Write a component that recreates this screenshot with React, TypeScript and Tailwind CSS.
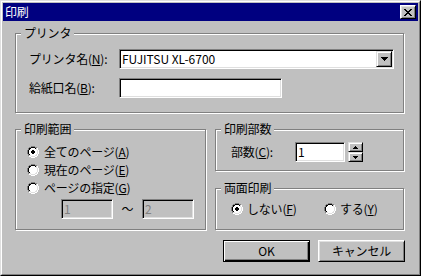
import React from "react";

function Radio({ checked }: { checked?: boolean }) {
  const rects: React.ReactElement[] = [];
  for (let y = 0; y < 12; y++) {
    for (let x = 0; x < 12; x++) {
      const dx = x + 0.5 - 6;
      const dy = y + 0.5 - 6;
      const d = Math.sqrt(dx * dx + dy * dy);
      let c: string | null = null;
      const dark = x + y <= 10;
      if (d <= 4) c = "#ffffff";
      else if (d <= 5) c = dark ? "#000000" : "#dfdfdf";
      else if (d <= 5.9) c = dark ? "#808080" : "#ffffff";
      if (c) rects.push(<rect key={`${x}-${y}`} x={x} y={y} width={1} height={1} fill={c} />);
    }
  }
  return (
    <svg width={12} height={12} viewBox="0 0 12 12" shapeRendering="crispEdges" className="shrink-0">
      {rects}
      {checked && (
        <g fill="#000">
          <rect x={5} y={4} width={2} height={1} />
          <rect x={4} y={5} width={4} height={2} />
          <rect x={5} y={7} width={2} height={1} />
        </g>
      )}
    </svg>
  );
}

function Group({ label, className, children }: { label: string; className: string; children?: React.ReactNode }) {
  return (
    <div className={`relative border border-[#808080] shadow-[inset_1px_1px_0_#ffffff,1px_1px_0_#ffffff] ${className}`}>
      <span className="absolute left-[5px] top-[-8px] bg-[#c0c0c0] px-[3px] leading-[14px]">{label}</span>
      {children}
    </div>
  );
}

function U({ c }: { c: string }) {
  return <span className="underline underline-offset-[1px]">{c}</span>;
}

const sunken =
  "border border-t-[#808080] border-l-[#808080] border-r-white border-b-white shadow-[inset_1px_1px_0_#000000,inset_-1px_-1px_0_#dfdfdf]";
const raised =
  "border border-t-[#dfdfdf] border-l-[#dfdfdf] border-r-black border-b-black shadow-[inset_1px_1px_0_#ffffff,inset_-1px_-1px_0_#808080]";

function CloseX() {
  const rows: [number, number][][] = [
    [[0, 2], [6, 2]],
    [[1, 2], [5, 2]],
    [[2, 4]],
    [[3, 2]],
    [[2, 4]],
    [[1, 2], [5, 2]],
    [[0, 2], [6, 2]],
  ];
  return (
    <svg width={8} height={7} viewBox="0 0 8 7" shapeRendering="crispEdges">
      {rows.map((r, y) => r.map(([x, w], i) => <rect key={`${y}-${i}`} x={x} y={y} width={w} height={1} fill="#000" />))}
    </svg>
  );
}

function DownArrow() {
  return (
    <svg width={7} height={4} viewBox="0 0 7 4" shapeRendering="crispEdges">
      <rect x={0} y={0} width={7} height={1} fill="#000" />
      <rect x={1} y={1} width={5} height={1} fill="#000" />
      <rect x={2} y={2} width={3} height={1} fill="#000" />
      <rect x={3} y={3} width={1} height={1} fill="#000" />
    </svg>
  );
}

function SmallArrow({ up }: { up?: boolean }) {
  return (
    <svg width={5} height={3} viewBox="0 0 5 3" shapeRendering="crispEdges">
      {up ? (
        <g fill="#000">
          <rect x={2} y={0} width={1} height={1} />
          <rect x={1} y={1} width={3} height={1} />
          <rect x={0} y={2} width={5} height={1} />
        </g>
      ) : (
        <g fill="#000">
          <rect x={0} y={0} width={5} height={1} />
          <rect x={1} y={1} width={3} height={1} />
          <rect x={2} y={2} width={1} height={1} />
        </g>
      )}
    </svg>
  );
}

export default function App() {
  return (
    <div className="w-[421px] h-[276px] bg-[#c0c0c0] border border-t-[#dfdfdf] border-l-[#dfdfdf] border-r-black border-b-black text-[12px] leading-[14px] text-black tracking-[-0.2px] font-['Noto_Sans_CJK_JP','Liberation_Sans',sans-serif]">
      <div className="h-full border border-t-white border-l-white border-r-[#808080] border-b-[#808080] p-px">
        {/* Title bar */}
        <div className="h-[18px] bg-[#000080] flex items-center justify-between pl-[2px] pr-[2px]">
          <span className="text-white leading-[14px]">印刷</span>
          <div className="w-[16px] h-[14px] flex items-center justify-center bg-[#c0c0c0] border border-t-white border-l-white border-r-black border-b-black shadow-[inset_1px_1px_0_#dfdfdf,inset_-1px_-1px_0_#808080]">
            <CloseX />
          </div>
        </div>

        <div className="pl-[12px] pt-[12px]">
          {/* Printer group */}
          <Group label="プリンタ" className="w-[389px] h-[80px]">
            <div className="pt-[15px] pl-[13px]">
              <div className="flex items-center h-[20px]">
                <span className="w-[90px]">
                  プリンタ名(<U c="N" />):
                </span>
                <div className={`w-[275px] h-[20px] bg-white flex items-center ${sunken}`}>
                  <span className="flex-1 pl-[2px] tracking-normal">FUJITSU XL-6700</span>
                  <div className={`w-[16px] h-[16px] mr-px flex items-center justify-center bg-[#c0c0c0] ${raised}`}>
                    <DownArrow />
                  </div>
                </div>
              </div>
              <div className="flex items-center h-[20px] mt-[9px]">
                <span className="w-[90px]">
                  給紙口名(<U c="B" />):
                </span>
                <div className={`w-[163px] h-[20px] bg-white ${sunken}`} />
              </div>
            </div>
          </Group>

          <div className="flex mt-[16px]">
            {/* Print range */}
            <Group label="印刷範囲" className="w-[191px] h-[101px]">
              <div className="pt-[13px] pl-[11px]">
                <div className="flex items-center h-[18px] gap-[5px]">
                  <Radio checked />
                  <span>
                    全てのページ(<U c="A" />)
                  </span>
                </div>
                <div className="flex items-center h-[18px] gap-[5px]">
                  <Radio />
                  <span>
                    現在のページ(<U c="E" />)
                  </span>
                </div>
                <div className="flex items-center h-[18px] gap-[5px]">
                  <Radio />
                  <span>
                    ページの指定(<U c="G" />)
                  </span>
                </div>
                <div className="flex items-center mt-[2px] pl-[34px]">
                  <div className="w-[52px] h-[20px] bg-[#c0c0c0] text-[#808080] flex items-center pl-[2px] border border-t-[#808080] border-l-[#808080] border-r-white border-b-white shadow-[inset_1px_1px_0_#000000,inset_-1px_-1px_0_#dfdfdf]">
                    1
                  </div>
                  <span className="w-[29px] text-center">～</span>
                  <div className="w-[52px] h-[20px] bg-[#c0c0c0] text-[#808080] flex items-center pl-[2px] border border-t-[#808080] border-l-[#808080] border-r-white border-b-white shadow-[inset_1px_1px_0_#000000,inset_-1px_-1px_0_#dfdfdf]">
                    2
                  </div>
                </div>
              </div>
            </Group>

            <div className="ml-[9px] w-[189px]">
              {/* Copies */}
              <Group label="印刷部数" className="w-[189px] h-[42px]">
                <div className="pt-[12px] pl-[15px] flex items-center">
                  <span className="w-[64px]">
                    部数(<U c="C" />):
                  </span>
                  <div className={`w-[50px] h-[20px] bg-white flex items-center pl-[2px] ${sunken}`}>1</div>
                  <div className="ml-[3px] w-[15px] h-[20px] flex flex-col">
                    <div className={`h-[10px] flex items-center justify-center ${raised}`}>
                      <SmallArrow up />
                    </div>
                    <div className={`h-[10px] flex items-center justify-center ${raised}`}>
                      <SmallArrow />
                    </div>
                  </div>
                </div>
              </Group>

              {/* Duplex */}
              <Group label="両面印刷" className="w-[189px] h-[42px] mt-[17px]">
                <div className="pt-[11px] pl-[15px] flex items-center h-[29px]">
                  <div className="flex items-center gap-[4px] w-[93px]">
                    <Radio checked />
                    <span>
                      しない(<U c="F" />)
                    </span>
                  </div>
                  <div className="flex items-center gap-[4px]">
                    <Radio />
                    <span>
                      する(<U c="Y" />)
                    </span>
                  </div>
                </div>
              </Group>
            </div>
          </div>

          {/* Buttons */}
          <div className="flex justify-end gap-[8px] w-[390px] mt-[10px]">
            <div className="w-[87px] h-[22px] border border-black">
              <div className="w-full h-full flex items-center justify-center shadow-[inset_1px_1px_0_#ffffff,inset_-1px_-1px_0_#000000,inset_-2px_-2px_0_#808080]">
                OK
              </div>
            </div>
            <div className="w-[87px] h-[22px] flex items-center justify-center border border-t-white border-l-white border-r-black border-b-black shadow-[inset_1px_1px_0_#dfdfdf,inset_-1px_-1px_0_#808080]">
              キャンセル
            </div>
          </div>
        </div>
      </div>
    </div>
  );
}
